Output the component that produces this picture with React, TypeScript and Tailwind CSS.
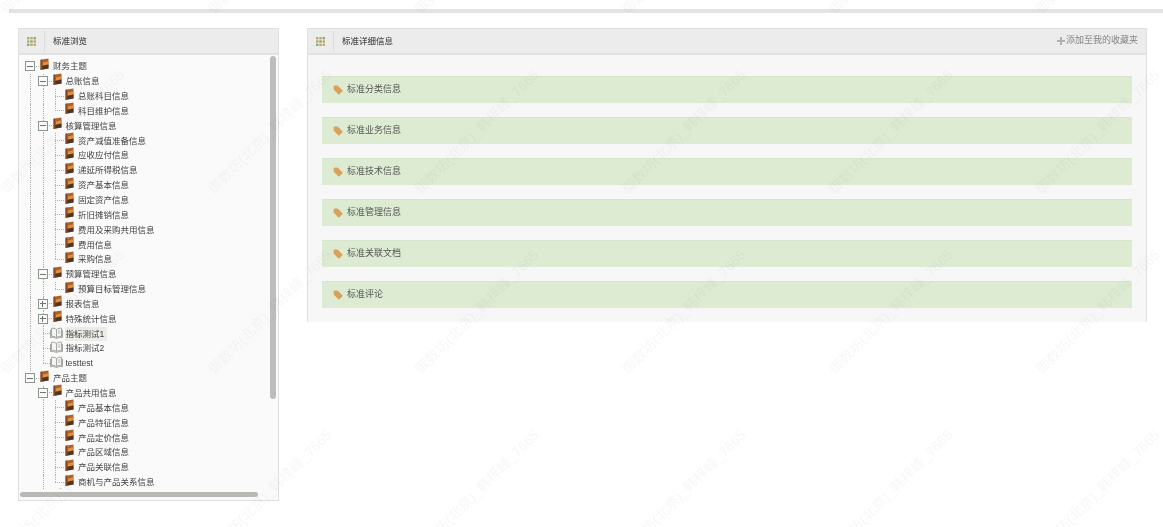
import React from 'react';

interface TreeNode {
  label?: string;
  kind?: 'folder' | 'doc';
  open?: boolean;
  closed?: boolean;
  selected?: boolean;
  children?: TreeNode[];
}

const leaves = (names: string[]): TreeNode[] => names.map((label) => ({ label }));

const tree: TreeNode[] = [
  {
    label: '财务主题',
    open: true,
    children: [
      { label: '总账信息', open: true, children: leaves(['总账科目信息', '科目维护信息']) },
      {
        label: '核算管理信息',
        open: true,
        children: leaves([
          '资产减值准备信息',
          '应收应付信息',
          '递延所得税信息',
          '资产基本信息',
          '固定资产信息',
          '折旧摊销信息',
          '费用及采购共用信息',
          '费用信息',
          '采购信息',
        ]),
      },
      { label: '预算管理信息', open: true, children: leaves(['预算目标管理信息']) },
      { label: '报表信息', closed: true },
      { label: '特殊统计信息', closed: true },
      { label: '指标测试1', kind: 'doc', selected: true },
      { label: '指标测试2', kind: 'doc' },
      { label: 'testtest', kind: 'doc' },
    ],
  },
  {
    label: '产品主题',
    open: true,
    children: [
      {
        label: '产品共用信息',
        open: true,
        children: leaves([
          '产品基本信息',
          '产品特征信息',
          '产品定价信息',
          '产品区域信息',
          '产品关联信息',
          '商机与产品关系信息',
        ]),
      },
      { closed: false },
    ],
  },
];

const sections = ['标准分类信息', '标准业务信息', '标准技术信息', '标准管理信息', '标准关联文档', '标准评论'];

const GridIcon = () => (
  <svg width="9" height="9" viewBox="0 0 9 9" className="shrink-0">
    {[0, 3.3, 6.6].map((y, r) =>
      [0, 3.3, 6.6].map((x, c) => (
        <rect
          key={`${r}${c}`}
          x={x}
          y={y}
          width="2.4"
          height="2.4"
          fill={['#c9a45c', '#a9b56c', '#8fa67c'][(r + c) % 3]}
        />
      )),
    )}
  </svg>
);

const BookIcon = () => (
  <svg width="11" height="13" viewBox="0 0 11 13" className="shrink-0 -mt-[4px]">
    <path d="M1.5 1.8 9.5.5v10L1.5 12z" fill="#ad5f2e" />
    <path d="M1.5 1.8 3.2 1.5v10.2l-1.7.3z" fill="#8a4a22" />
    <path d="M4 4.5 9.5 3.2v3L4 7.5z" fill="#e0913f" />
    <path d="M3.2 8 9.5 6.5v4L3.2 11.5z" fill="#4c3628" />
  </svg>
);

const DocIcon = () => (
  <svg width="13" height="12" viewBox="0 0 13 12" fill="none" stroke="#9a9d98" strokeWidth="0.9" className="-ml-[2px] shrink-0 -mt-[2px]">
    <path d="M6.5 2.5C5 1.3 3.2 1 1.5 1.2v8.2c1.8-.2 3.5.1 5 1.1 1.5-1 3.2-1.3 5-1.1V1.2C9.8 1 8 1.3 6.5 2.5zM6.5 2.5v8" fill="#f5f5f2" />
    <path d="M.5 3v7.6c2.2-.2 4.2 0 6 .9 1.8-.9 3.8-1.1 6-.9V3" />
    <path d="M8 4h2.2M8 6h2.2" strokeWidth="0.7" />
  </svg>
);

const TagIcon = () => (
  <svg width="10" height="10" viewBox="0 0 10 10" className="shrink-0 -mt-px">
    <path d="M.6 1.6 1.6.6h3l4.8 4.6a.8.8 0 0 1 0 1.1L6.4 9.3a.8.8 0 0 1-1.1 0L.6 4.6z" fill="#dba05a" />
  </svg>
);

const Expander = ({ open }: { open: boolean }) => (
  <span className="relative z-10 flex h-[10px] w-[10px] shrink-0 items-center justify-center border border-[#8a968b] bg-[#fafafa]">
    <span className="absolute h-px w-[6px] bg-[#6d756d]" />
    {!open && <span className="absolute h-[6px] w-px bg-[#6d756d]" />}
  </span>
);

const TreeRows = ({ nodes, guides }: { nodes: TreeNode[]; guides: boolean[] }) => (
  <>
    {nodes.map((node, i) => {
      const last = i === nodes.length - 1;
      const hasBox = node.open || node.closed;
      return (
        <React.Fragment key={i}>
          <div className="flex h-[14.857px] items-center">
            {guides.map((g, k) => (
              <span key={k} className={`h-full w-[12.5px] shrink-0 border-l border-dotted ${g ? 'border-[#b0b0b0]' : 'border-transparent'}`} />
            ))}
            <span className="relative flex h-full w-[9px] shrink-0 items-center">
              <span className={`absolute left-0 top-0 w-0 border-l border-dotted border-[#b0b0b0] ${guides.length === 0 ? 'hidden' : last ? 'h-1/2' : 'h-full'}`} />
              {hasBox ? (
                <span className="-ml-[5px]">
                  <Expander open={!!node.open} />
                </span>
              ) : (
                <span className="h-0 w-full border-t border-dotted border-[#b0b0b0]" />
              )}
              {hasBox && <span className="ml-px h-0 w-[3px] border-t border-dotted border-[#b0b0b0]" />}
            </span>
            {node.kind === 'doc' ? <DocIcon /> : <BookIcon />}
            {node.label && (
              <span
                className={`ml-[2px] whitespace-nowrap pl-px text-[8.5px] leading-[14px] text-[#3f3f3f] ${
                  node.selected ? 'bg-[#e9ece7] pr-[3px]' : 'pr-px'
                }`}
              >
                {node.label}
              </span>
            )}
          </div>
          {node.children && <TreeRows nodes={node.children} guides={[...guides, !last]} />}
        </React.Fragment>
      );
    })}
  </>
);

const PanelHeader = ({ title, action }: { title: string; action?: React.ReactNode }) => (
  <div className="flex h-[26px] shrink-0 items-center border-b-2 border-[#e2e2e2] bg-[#ececec] pl-[8px] pr-[8px]">
    <GridIcon />
    <span className="ml-[8px] h-[21px] w-px bg-[#dcdcdc]" />
    <span className="ml-[8px] text-[8.5px] font-medium text-[#4f4f4f]">{title}</span>
    {action}
  </div>
);

const rowsY = [-48, 132, 312, 492];
const colsX = [63, 270, 477, 684, 891, 1098];

export default function App() {
  return (
    <div className="relative h-[527px] w-full overflow-hidden bg-white pl-[9px] pt-[9px] font-['Liberation_Sans','Noto_Sans_CJK_SC',sans-serif] blur-[0.35px]">
      <div className="h-[4px] bg-[#e3e3e3]" />
      <div className="flex items-start gap-[28px] pl-[9px] pt-[15px]">
        <section className="relative flex h-[473px] w-[261px] shrink-0 flex-col border border-[#e0e0e0] bg-[#fafafa]">
          <PanelHeader title="标准浏览" />
          <div className="flex-1 overflow-hidden pl-[11px] pt-[4px]">
            <TreeRows nodes={tree} guides={[]} />
          </div>
          <div className="h-[11px] shrink-0 bg-[#fafafa]" />
          <div className="absolute right-[2px] top-[27px] h-[343px] w-[6px] rounded-full bg-[#bdbdbd]" />
          <div className="absolute bottom-[3px] left-px h-[5px] w-[238px] rounded-full bg-[#b8b8b4]" />
        </section>

        <section className="flex w-[840px] shrink-0 flex-col border-l border-r border-t border-[#e0e0e0] bg-[#f7f7f7]">
          <PanelHeader
            title="标准详细信息"
            action={
              <span className="ml-auto flex items-center gap-[1px] text-[9px] text-[#858585]">
                <svg width="8" height="8" viewBox="0 0 8 8" className="shrink-0">
                  <path d="M3 0h2v3h3v2H5v3H3V5H0V3h3z" fill="#b0b0b0" />
                </svg>
                添加至我的收藏夹
              </span>
            }
          />
          <div className="flex flex-col gap-[14px] px-[14px] pb-[14px] pt-[21px]">
            {sections.map((name) => (
              <div key={name} className="flex h-[27px] items-center gap-[4px] border-t border-[#d6e6cb] bg-[#dcebd2] pl-[11px]">
                <TagIcon />
                <span className="text-[9px] text-[#555555]">{name}</span>
              </div>
            ))}
          </div>
        </section>
      </div>

      <div className="pointer-events-none absolute inset-0 overflow-hidden">
        {rowsY.flatMap((y) =>
          colsX.map((x) => (
            <span
              key={`${x}-${y}`}
              className="absolute -translate-x-1/2 -translate-y-1/2 -rotate-45 whitespace-nowrap text-[14px] text-black/[0.04]"
              style={{ left: x, top: y }}
            >
              御数坊(北京)_韩梓峰_7665
            </span>
          )),
        )}
      </div>
    </div>
  );
}
